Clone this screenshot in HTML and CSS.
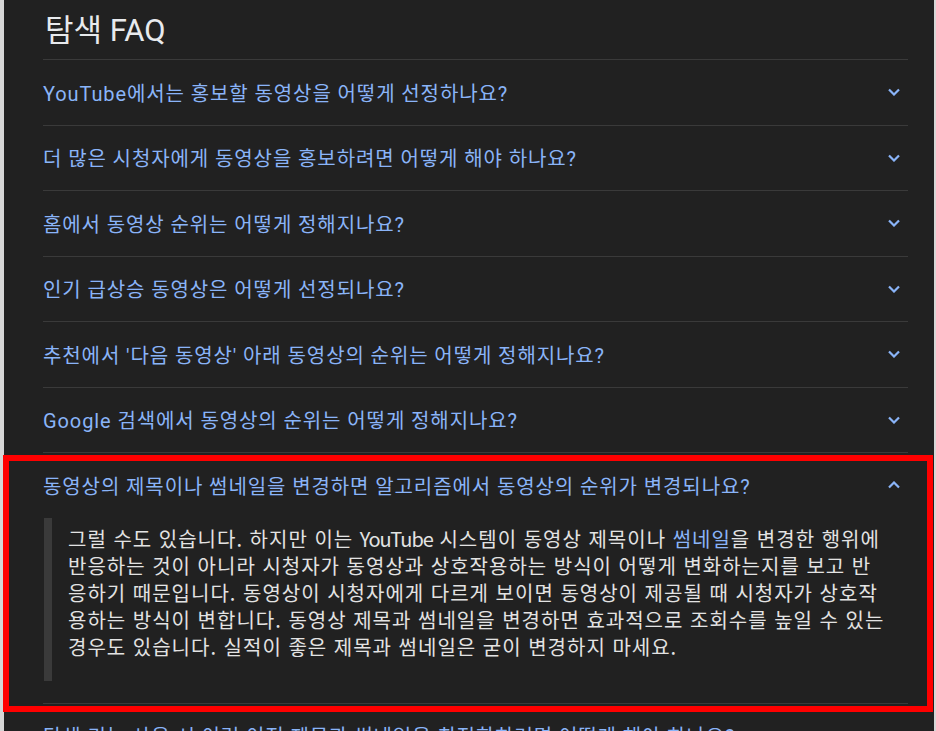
FILE: index.html
```html
<!DOCTYPE html>
<html lang="ko">
<head>
    <meta charset="UTF-8">
    <meta name="viewport" content="width=device-width, initial-scale=1.0">
    <title>탐색 FAQ</title>
    <link rel="stylesheet" href="styles.css">
</head>
<body>
    <div class="panel">
        <h2 class="faq-title">탐색 FAQ</h2>

        <div class="faq-item">
            <div class="question">
                <span>YouTube에서는 홍보할 동영상을 어떻게 선정하나요?</span>
                <svg class="chevron" width="12" height="8" viewBox="0 0 12 8"><path d="M1 1.5l5 5 5-5"/></svg>
            </div>
        </div>
        <div class="faq-item">
            <div class="question">
                <span>더 많은 시청자에게 동영상을 홍보하려면 어떻게 해야 하나요?</span>
                <svg class="chevron" width="12" height="8" viewBox="0 0 12 8"><path d="M1 1.5l5 5 5-5"/></svg>
            </div>
        </div>
        <div class="faq-item">
            <div class="question">
                <span>홈에서 동영상 순위는 어떻게 정해지나요?</span>
                <svg class="chevron" width="12" height="8" viewBox="0 0 12 8"><path d="M1 1.5l5 5 5-5"/></svg>
            </div>
        </div>
        <div class="faq-item">
            <div class="question">
                <span>인기 급상승 동영상은 어떻게 선정되나요?</span>
                <svg class="chevron" width="12" height="8" viewBox="0 0 12 8"><path d="M1 1.5l5 5 5-5"/></svg>
            </div>
        </div>
        <div class="faq-item">
            <div class="question">
                <span>추천에서 '다음 동영상' 아래 동영상의 순위는 어떻게 정해지나요?</span>
                <svg class="chevron" width="12" height="8" viewBox="0 0 12 8"><path d="M1 1.5l5 5 5-5"/></svg>
            </div>
        </div>
        <div class="faq-item">
            <div class="question">
                <span>Google 검색에서 동영상의 순위는 어떻게 정해지나요?</span>
                <svg class="chevron" width="12" height="8" viewBox="0 0 12 8"><path d="M1 1.5l5 5 5-5"/></svg>
            </div>
        </div>

        <!-- open item, highlighted -->
        <div class="faq-item open">
            <div class="question">
                <span>동영상의 제목이나 썸네일을 변경하면 알고리즘에서 동영상의 순위가 변경되나요?</span>
                <svg class="chevron" width="12" height="8" viewBox="0 0 12 8"><path d="M1 6.5l5-5 5 5"/></svg>
            </div>
            <div class="answer">
                그럴 수도 있습니다. 하지만 이는 <span class="brand">YouTube</span> 시스템이 동영상 제목이나 <a href="#">썸네일</a>을 변경한 행위에 반응하는 것이 아니라 시청자가 동영상과 상호작용하는 방식이 어떻게 변화하는지를 보고 반응하기 때문입니다. 동영상이 시청자에게 다르게 보이면 동영상이 제공될 때 시청자가 상호작용하는 방식이 변합니다. 동영상 제목과 썸네일을 변경하면 효과적으로 조회수를 높일 수 있는 경우도 있습니다. 실적이 좋은 제목과 썸네일은 굳이 변경하지 마세요.
            </div>
        </div>

        <div class="faq-item">
            <div class="question">
                <span>탐색 기능 사용 시 이런 이전 제목과 썸네일을 최적화하려면 어떻게 해야 하나요?</span>
                <svg class="chevron" width="12" height="8" viewBox="0 0 12 8"><path d="M1 1.5l5 5 5-5"/></svg>
            </div>
        </div>
    </div>
</body>
</html>
```

FILE: styles.css
```css
html, body {
    height: 100%;
}
body {
    margin: 0;
    background-color: #d6d6d6;
    overflow: hidden;
    font-family: Roboto, "Noto Sans CJK KR", sans-serif;
}
.panel {
    margin-left: 4px;
    width: 930px;
    min-height: 100%;
    box-sizing: border-box;
    padding: 0 26px 0 39px;
    background-color: #212121;
}
.faq-title {
    margin: 0;
    padding: 11px 0 8px 2px;
    line-height: 40px;
    font-size: 31px;
    font-weight: normal;
    color: #e8eaed;
    border-bottom: 1px solid #3a3a3a;
}
.faq-item {
    position: relative;
    border-bottom: 1px solid #3a3a3a;
}
.question {
    display: flex;
    align-items: center;
    justify-content: space-between;
    height: 64.5px;
    font-size: 20px;
    letter-spacing: 0.9px;
    color: #8ab4f8;
}
.chevron {
    margin-right: 8px;
    fill: none;
    stroke: #8ab4f8;
    stroke-width: 2.2;
}
.answer {
    margin: 0 21px 22px 1px;
    padding: 7px 0 21px 16px;
    border-left: 8px solid #3a3a3a;
    font-family: "Noto Sans CJK KR", sans-serif;
    font-size: 20px;
    letter-spacing: 1px;
    line-height: 27px;
    color: #e3e3e3;
}
.answer .brand {
    letter-spacing: -1px;
}
.answer a {
    color: #8ab4f8;
    text-decoration: none;
}
/* red highlight box drawn over the open item */
.faq-item.open::after {
    content: "";
    position: absolute;
    top: 2px;
    left: -40px;
    right: -25px;
    bottom: -9px;
    border: 6px solid #ff0000;
    pointer-events: none;
}
```
